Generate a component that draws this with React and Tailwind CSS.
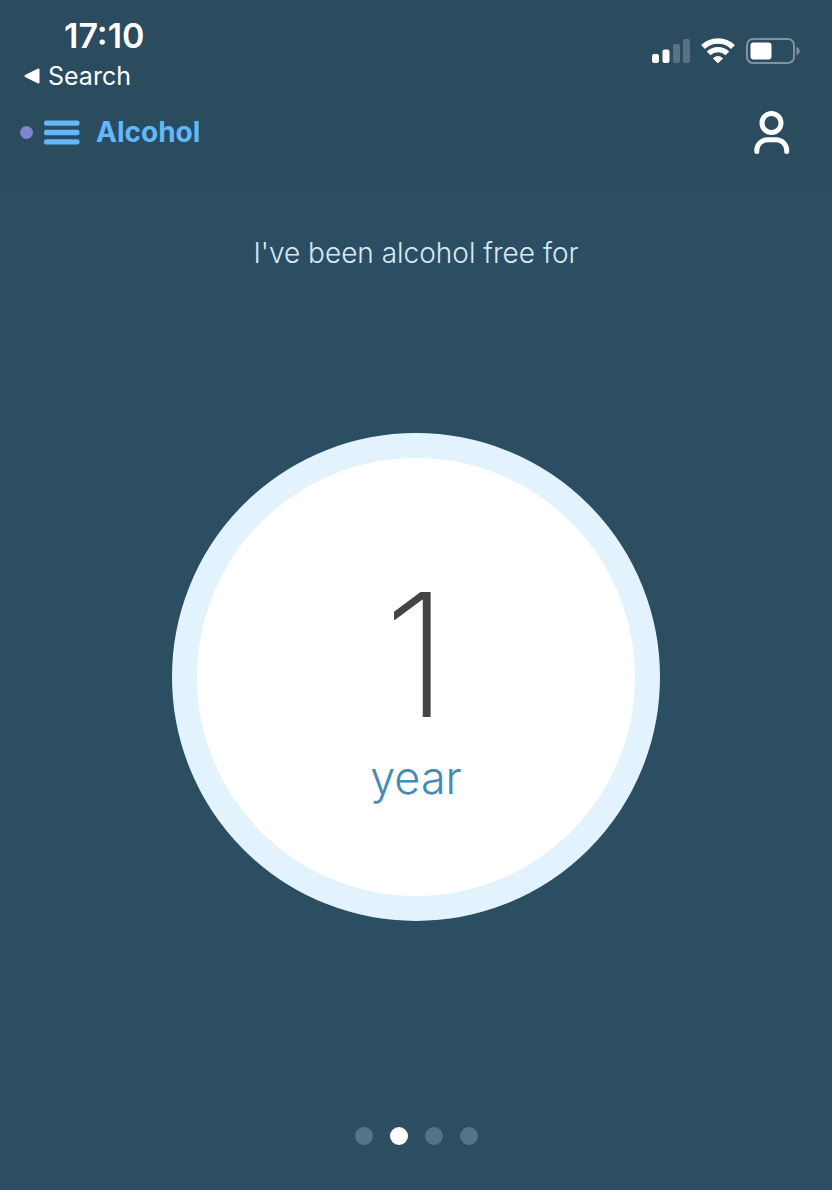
import clsx from "clsx";

const slides = ["Months", "Years", "Weeks", "Days"];

const SignalIcon = () => (
  <svg width="38" height="26" viewBox="0 0 38 26" fill="#fff" aria-hidden="true">
    <rect x="0" y="16" width="7" height="9" rx="2" />
    <rect x="10.5" y="11.5" width="7" height="13.5" rx="2" />
    <rect x="21" y="6" width="7" height="19" rx="2" opacity="0.22" />
    <rect x="31" y="1" width="7" height="24" rx="2" opacity="0.22" />
  </svg>
);

const WifiIcon = () => (
  <svg width="34" height="26" viewBox="0 0 34 26" aria-hidden="true">
    <g fill="none" stroke="#fff" strokeWidth="5.4">
      <path d="M2 9a21.6 21.6 0 0 1 30 0" />
      <path d="M7.6 15.4a13.6 13.6 0 0 1 18.8 0" />
    </g>
    <path
      d="M12.4 20.4a6.8 6.8 0 0 1 9.2 0L17 24.8z"
      fill="#fff"
      stroke="#fff"
      strokeLinejoin="round"
    />
  </svg>
);

const BatteryIcon = () => (
  <svg width="54" height="26" viewBox="0 0 54 26" aria-hidden="true">
    <rect x="1" y="1" width="47" height="24" rx="6" fill="none" stroke="#7f929f" strokeWidth="2" />
    <rect x="4.5" y="4.5" width="21" height="17" rx="3" fill="#fff" />
    <path d="M50.5 8.8c4.2 1.4 4.2 7 0 8.4z" fill="#7f929f" />
  </svg>
);

const UserIcon = () => (
  <svg
    width="36"
    height="44"
    viewBox="0 0 36 44"
    fill="none"
    stroke="#fff"
    strokeWidth="5"
    strokeLinecap="round"
    aria-hidden="true"
  >
    <circle cx="17.5" cy="13" r="9.5" />
    <path d="M2.8 41.5v-1.3A10.7 10.7 0 0 1 13.5 29.8h8.5a10.7 10.7 0 0 1 10.7 10.4v1.3" />
  </svg>
);

const StatusBar = () => (
  <div className="flex items-start justify-between pr-8 pl-6">
    <div>
      <p className="pl-10 text-[34px] leading-10 font-semibold">17:10</p>
      <a href="#search" className="flex items-center gap-2 text-[25px] leading-10">
        <svg width="16" height="16" viewBox="0 0 16 16" aria-hidden="true">
          <path
            d="M1.5 8 14.5 1.5v13z"
            fill="#fff"
            stroke="#fff"
            strokeWidth="2"
            strokeLinejoin="round"
          />
        </svg>
        Search
      </a>
    </div>
    <div className="flex items-center gap-[11px] pt-[22px]">
      <SignalIcon />
      <WifiIcon />
      <BatteryIcon />
    </div>
  </div>
);

const NavBar = () => (
  <nav className="flex items-center justify-between pt-3 pr-[42px] pb-[29px] pl-5">
    <button type="button" className="flex items-center text-[28px] leading-12 font-bold text-[#62b8fb]">
      <span className="mr-[11px] size-[13px] rounded-full bg-[#8086ce]" />
      <svg width="36" height="26" viewBox="0 0 36 26" fill="currentColor" aria-hidden="true">
        <rect x="0" y="1.4" width="35.5" height="5.4" rx="2" />
        <rect x="0" y="10.8" width="35.5" height="5.4" rx="2" />
        <rect x="0" y="20.2" width="35.5" height="5.4" rx="2" />
      </svg>
      <span className="ml-4">Alcohol</span>
    </button>
    <button type="button" aria-label="Profile">
      <UserIcon />
    </button>
  </nav>
);

const Counter = ({ value, unit }) => (
  <div className="mt-40 flex size-[488px] flex-col items-center justify-center rounded-full border-[25px] border-[#e3f3fd] bg-white pt-[26px]">
    <p className="text-[172px] leading-[160px] font-extralight text-[#444444]">{value}</p>
    <p className="mt-4 text-[45px] leading-14 font-light text-[#468ab6]">{unit}</p>
  </div>
);

const App = () => (
  <div className="flex min-h-screen flex-col bg-white pb-[10px] font-['Inter',sans-serif] text-white">
    <header className="bg-[#2b4b5e] pt-4">
      <StatusBar />
      <NavBar />
    </header>
    <main className="flex flex-1 flex-col items-center bg-[#2c4e62] pt-12 pb-[45px]">
      <h1 className="text-[28px] leading-10 font-light text-[#d9e9f3]">I've been alcohol free for</h1>
      <Counter value={1} unit="year" />
      <div className="mt-auto flex gap-[17px]">
        {slides.map((slide, i) => (
          <button
            key={slide}
            type="button"
            aria-label={slide}
            className={clsx("size-[18px] rounded-full", i === 1 ? "bg-white" : "bg-[#567485]")}
          />
        ))}
      </div>
    </main>
  </div>
);

export default App;
